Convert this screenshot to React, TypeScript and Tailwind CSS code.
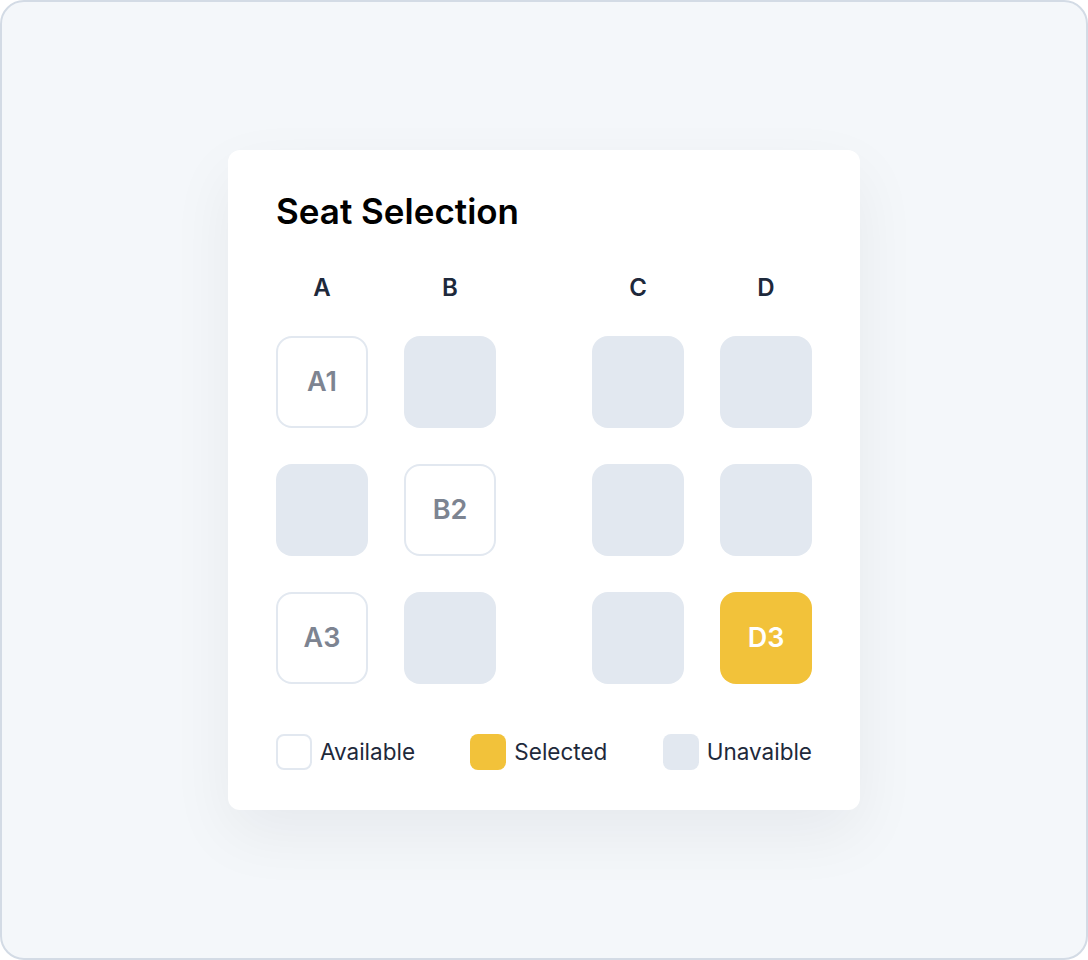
import React from "react"

type Seat = { id: string; state: "available" | "unavailable" | "selected" }

const rows: Seat[][] = [
  [
    { id: "A1", state: "available" },
    { id: "B1", state: "unavailable" },
    { id: "C1", state: "unavailable" },
    { id: "D1", state: "unavailable" },
  ],
  [
    { id: "A2", state: "unavailable" },
    { id: "B2", state: "available" },
    { id: "C2", state: "unavailable" },
    { id: "D2", state: "unavailable" },
  ],
  [
    { id: "A3", state: "available" },
    { id: "B3", state: "unavailable" },
    { id: "C3", state: "unavailable" },
    { id: "D3", state: "selected" },
  ],
]

function SeatBox({ seat }: { seat: Seat }) {
  if (seat.state === "available") {
    return (
      <div className="w-[92px] h-[92px] rounded-2xl border-2 border-[#e2e8f0] bg-white flex items-center justify-center text-[27px] font-semibold text-[#7d8491]">
        {seat.id}
      </div>
    )
  }
  if (seat.state === "selected") {
    return (
      <div className="w-[92px] h-[92px] rounded-2xl bg-[#f2c23a] flex items-center justify-center text-[27px] font-semibold text-white">
        {seat.id}
      </div>
    )
  }
  return <div className="w-[92px] h-[92px] rounded-2xl bg-[#e2e8f0]" />
}

function Legend({ box, label }: { box: string; label: string }) {
  return (
    <div className="flex items-center gap-2">
      <div className={box} />
      <span className="text-[22.5px] text-[#1e293b]">{label}</span>
    </div>
  )
}

export default function App() {
  return (
    <div className="w-[1088px] h-[960px] bg-[#f4f7fa] border-2 border-[#d3dbe5] rounded-[24px] flex items-start justify-center pt-[148px] font-['Inter',sans-serif]">
      <div className="w-[632px] h-[660px] bg-white rounded-xl shadow-[0_24px_64px_rgba(15,23,42,0.06)] px-12 pt-[37px]">
        <h1 className="text-[35px] font-semibold text-black leading-[48px]">Seat Selection</h1>

        {/* column labels */}
        <div className="mt-[37px] flex text-[24px] font-semibold text-[#1e293b] leading-8">
          <div className="w-[92px] text-center">A</div>
          <div className="w-[92px] ml-9 text-center">B</div>
          <div className="w-[92px] ml-24 text-center">C</div>
          <div className="w-[92px] ml-9 text-center">D</div>
        </div>

        <div className="mt-8 flex flex-col gap-9">
          {rows.map((row, i) => (
            <div key={i} className="flex">
              <SeatBox seat={row[0]} />
              <div className="ml-9"><SeatBox seat={row[1]} /></div>
              <div className="ml-24"><SeatBox seat={row[2]} /></div>
              <div className="ml-9"><SeatBox seat={row[3]} /></div>
            </div>
          ))}
        </div>

        <div className="mt-[50px] flex justify-between items-center">
          <Legend box="w-9 h-9 rounded-lg border-2 border-[#e2e8f0] bg-white" label="Available" />
          <Legend box="w-9 h-9 rounded-lg bg-[#f2c23a]" label="Selected" />
          <Legend box="w-9 h-9 rounded-lg bg-[#e2e8f0]" label="Unavaible" />
        </div>
      </div>
    </div>
  )
}
